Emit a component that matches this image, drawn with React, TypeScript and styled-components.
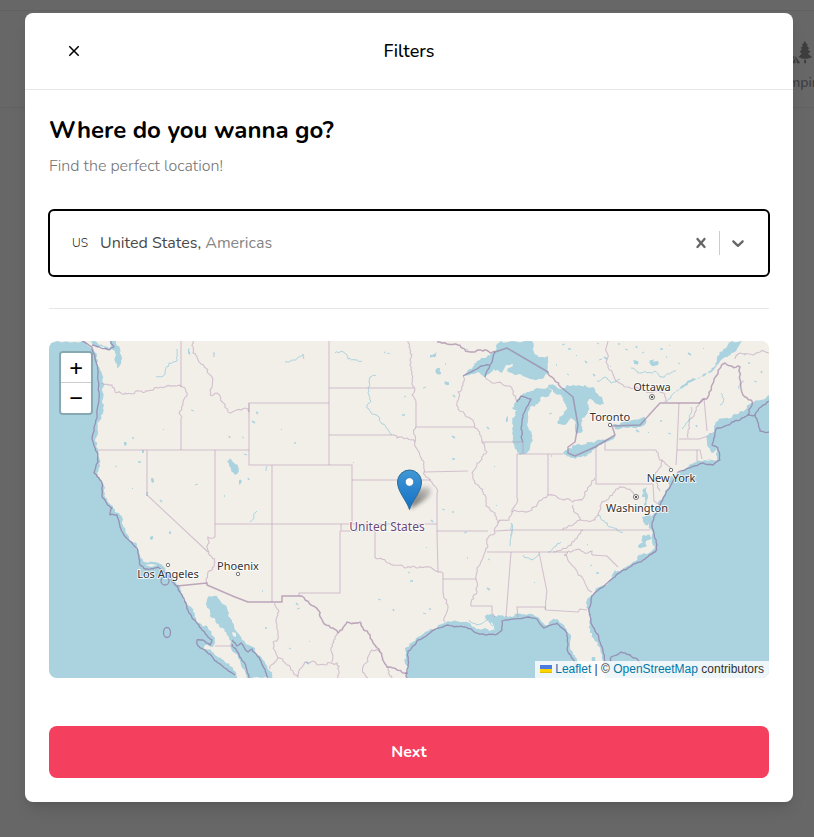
import React, { useState } from "react";
import styled, { createGlobalStyle } from "styled-components";
import { IoMdClose } from "react-icons/io";
import { GiForestCamp, GiBoatFishing } from "react-icons/gi";

const uiFont = `Nunito, Lato, "Open Sans", sans-serif`;

const GlobalStyle = createGlobalStyle`
  *, *::before, *::after { box-sizing: border-box; }
  body { margin: 0; background: #fff; font-family: ${uiFont}; color: #000; }
  button { font: inherit; color: inherit; border: 0; background: none; padding: 0; cursor: pointer; }
`;

const Page = styled.div`
  min-height: 100vh;
  position: relative;
  overflow: hidden;
`;

const Backdrop = styled.div`
  position: absolute;
  inset: 0;
  overflow: hidden;
`;

const NavEdge = styled.div`
  height: 11px;
  border-bottom: 1px solid #e5e7eb;
`;

const CategoryBar = styled.div`
  display: flex;
  justify-content: space-between;
  padding: 16px 0 2px;
  margin: 0 -26px 0 -42px;
  border-bottom: 1px solid #e5e7eb;
`;

const Category = styled.div`
  display: flex;
  flex-direction: column;
  align-items: center;
  gap: 8px;
  padding: 12px;
  color: #737373;
  font-size: 14px;
  font-weight: 500;
  line-height: 20px;
`;

const Scrim = styled.div`
  position: relative;
  min-height: 100vh;
  padding: 13px 21px 35px 25px;
  background: rgba(38, 38, 38, 0.7);
`;

const Modal = styled.section`
  max-width: 768px;
  margin: 0 auto;
  background: #fff;
  border-radius: 8px;
  box-shadow: 0 10px 15px -3px rgba(0, 0, 0, 0.1), 0 4px 6px -4px rgba(0, 0, 0, 0.1);
`;

const Header = styled.header`
  display: grid;
  grid-template-columns: 1fr auto 1fr;
  align-items: center;
  height: 77px;
  padding: 0 36px;
  border-bottom: 1px solid #e5e7eb;
`;

const CloseButton = styled.button`
  display: flex;
  justify-self: start;
  padding: 4px;
`;

const HeaderTitle = styled.h1`
  margin: 0;
  font-size: 18px;
  line-height: 28px;
  font-weight: 500;
`;

const Body = styled.div`
  display: flex;
  flex-direction: column;
  gap: 32px;
  padding: 24px;
`;

const Title = styled.h2`
  margin: 0 0 8px;
  font-size: 24px;
  line-height: 32px;
  font-weight: 700;
`;

const Subtitle = styled.p`
  margin: 0;
  font-size: 16px;
  line-height: 24px;
  font-weight: 300;
  color: #737373;
`;

const Control = styled.div`
  display: flex;
  align-items: center;
  margin: -1px;
  padding: 12px;
  border: 2px solid #000;
  border-radius: 6px;
`;

const ValueArea = styled.div`
  position: relative;
  display: flex;
  flex: 1;
  align-items: center;
  gap: 12px;
  height: 40px;
  padding: 0 10px;
  font-size: 16px;
  font-weight: 400;
  color: #4a4a4a;
`;

const CountryCode = styled.span`
  font-size: 12px;
  font-weight: 300;
  color: #1a1a1a;
`;

const Region = styled.span`
  color: #858585;
`;

const NativeSelect = styled.select`
  position: absolute;
  inset: 0;
  width: 100%;
  opacity: 0;
  cursor: pointer;
`;

const IndicatorButton = styled.button`
  display: flex;
  padding: 8px;
  color: #666;
`;

const Separator = styled.span`
  width: 1px;
  height: 24px;
  background: #ccc;
`;

const Divider = styled.hr`
  width: 100%;
  height: 1px;
  margin: 0;
  border: 0;
  background: #e5e7eb;
`;

const MapFrame = styled.div`
  position: relative;
  overflow: hidden;
  border-radius: 8px;
  background: #f2efe9;
`;

const MapDrawing = styled.svg`
  display: block;
  width: 100%;
  height: auto;
`;

const ZoomControl = styled.div`
  position: absolute;
  top: 10px;
  left: 10px;
  border: 2px solid rgba(0, 0, 0, 0.2);
  border-radius: 4px;
  background-clip: padding-box;
`;

const ZoomButton = styled.button`
  display: block;
  width: 30px;
  height: 30px;
  background: #fff;
  font: 22px/30px "DejaVu Sans Mono", monospace;
  color: #000;
  &:first-child {
    border-bottom: 1px solid #ccc;
    border-radius: 2px 2px 0 0;
  }
  &:last-child {
    border-radius: 0 0 2px 2px;
  }
`;

const Attribution = styled.div`
  position: absolute;
  right: 0;
  bottom: 0;
  padding: 0 5px;
  background: rgba(255, 255, 255, 0.8);
  font: 12px/17px "Liberation Sans", sans-serif;
  color: #333;
  a { color: #0078a8; text-decoration: none; }
`;

const Flag = styled.svg`
  margin-right: 3px;
`;

const Footer = styled.footer`
  display: flex;
  padding: 24px;
`;

const NextButton = styled.button`
  flex: 1;
  height: 52px;
  border-radius: 8px;
  background: #f43f5e;
  color: #fff;
  font-size: 16px;
  font-weight: 700;
`;

type Pt = [number, number];

const parse = (s: string): Pt[] =>
  s.trim().split(/\s+/).map((p) => p.split(",").map(Number) as Pt);

/* Midpoint displacement gives coasts and rivers their ragged look. */
function rough(s: string, amp: number, closed = false): string {
  let pts = parse(s);
  if (closed) pts.push(pts[0]);
  let seed = pts.length * 7919 + Math.round(pts[0][0] * 31);
  const rnd = () => {
    seed = (seed * 1103515245 + 12345) % 2147483648;
    return seed / 2147483648 - 0.5;
  };
  for (let level = 0; level < 3; level++) {
    const next: Pt[] = [pts[0]];
    for (let i = 1; i < pts.length; i++) {
      const [ax, ay] = pts[i - 1];
      const [bx, by] = pts[i];
      const len = Math.hypot(bx - ax, by - ay);
      if (len > 3 && len < 60) {
        const k = Math.min(len * 0.3, amp) * rnd() * 2;
        next.push([(ax + bx) / 2 - ((by - ay) / len) * k, (ay + by) / 2 + ((bx - ax) / len) * k]);
      }
      next.push([bx, by]);
    }
    pts = next;
  }
  return "M" + pts.map(([x, y]) => `${x.toFixed(1)} ${y.toFixed(1)}`).join("L") + (closed ? "Z" : "");
}

const line = (s: string) => "M" + s.trim().replace(/\s+/g, "L");

const seas = [
  "0,0 34,0 45,8 48,14 51,27 54,42 53,60 52,74 47,97 49,109 51,119 48,132 55,144 56,156 64,167 66,171 71,174 76,187 79,194 88,204 91,214 94,220 106,221 116,227 124,236 129,244 134,254 143,267 148,281 159,287 166,297 164,306 156,304 154,308 163,311 176,321 183,326 188,337 0,337",
  "158,259 160,255 169,257 172,261 178,267 183,279 188,291 196,301 206,307 209,314 216,321 223,331 224,337 198,337 193,327 189,317 183,310 182,300 173,287 163,277 158,267",
  "358,337 357,324 357,311 356,307 369,296 389,284 399,280 416,281 428,288 440,290 446,289 444,283 436,277 444,276 459,276 466,273 479,273 489,276 496,284 508,278 518,289 522,297 521,307 528,319 533,327 536,337",
  "720,337 556,337 556,324 553,314 548,301 541,284 538,264 546,250 563,237 566,229 577,226 588,216 598,213 606,205 603,194 600,184 604,174 609,163 616,150 621,135 633,129 656,119 668,119 668,108 664,112 659,106 659,94 669,80 683,76 696,69 702,62 712,59 720,54",
  "40,0 47,6 60,8 62,5 61,0 67,0 71,8 72,20 68,27 66,16 64,9 58,9 50,4 46,0",
];

const lakes = [
  "414,35 421,28 431,19 444,12 451,0 483,0 485,11 492,16 499,15 500,31 495,37 488,39 479,37 468,34 458,30 464,23 457,24 453,32 444,28 440,33 436,36 431,32",
  "471,114 466,108 464,98 464,84 468,69 463,67 467,61 473,54 480,51 488,47 499,46 503,49 498,56 491,57 489,63 481,66 479,74 478,84 483,94 481,107 476,113",
  "499,45 505,44 513,48 518,44 536,44 546,48 553,56 555,63 548,63 540,58 538,62 539,70 533,77 534,89 528,93 526,88 526,80 522,77 514,84 509,83 510,76 518,68 513,56 504,49",
  "514,112 517,109 523,108 524,104 538,101 556,99 566,94 562,99 552,104 542,112 526,118",
  "563,84 570,84 579,79 596,76 597,82 589,86 575,86 566,88",
  "626,51 637,42 647,38 659,32 668,19 674,9 683,0 693,0 688,8 676,16 668,24 660,32 646,39 636,45",
  "178,120 181,117 184,121 189,124 190,130 186,134 182,130",
  "381,14 389,11 387,15 381,17",
  "387,28 391,27 392,33 388,33",
  "396,40 400,41 400,44 397,44",
  "102,137 104,137 105,141 103,142",
  "97,151 99,151 99,155 97,155",
  "75,101 78,102 77,105 75,104",
  "93,109 95,109 95,112 93,112",
  "139,8 141,7 141,14 139,12",
  "164,11 166,12 167,17 164,16",
  "190,139 193,140 191,144 190,143",
  "207,70 210,71 209,74 207,72",
  "335,10 341,12 340,13 335,12",
  "457,77 459,75 458,81 457,81",
  "601,19 605,18 604,21 609,20 609,24 602,24",
  "584,19 589,20 588,24 585,23",
  "594,148 598,146 599,156 598,166 595,163 596,156 593,156",
  "593,195 601,194 603,197 597,200 598,205 589,206 594,202",
  "593,176 602,173 603,180 599,184 594,181",
  "637,127 652,121 662,118 652,125 640,129",
  "101,196 104,195 103,199 101,198",
  "120,191 122,190 122,193 120,193",
  "436,276 441,273 446,276 449,281 441,282",
  "540,285 542,284 543,292 541,292",
  "543,316 546,316 546,320 543,320",
];

/* Small ponds, each drawn as a short stroke. */
const ponds: Pt[] = [
  [115, 89], [84, 97], [143, 69], [181, 95], [67, 126], [90, 121], [84, 147], [112, 159], [147, 144], [176, 155],
  [194, 96], [204, 80], [233, 89], [246, 102], [196, 113], [200, 137], [356, 56], [354, 74], [305, 121],
  [248, 262], [249, 268], [214, 250], [241, 307], [258, 321], [261, 301], [217, 287], [330, 258], [345, 268], [360, 232],
  [362, 240], [378, 206], [383, 179], [416, 192], [419, 217], [440, 218], [439, 247], [486, 242], [381, 268], [375, 272],
  [499, 295], [474, 295], [404, 118], [446, 125], [439, 86], [501, 73], [503, 115], [549, 2], [556, 16], [562, 26],
  [570, 3], [577, 8], [588, 5], [594, 12], [612, 8], [621, 4], [545, 33], [551, 19], [618, 16], [630, 22],
  [640, 12], [655, 8], [700, 22], [706, 40], [713, 30], [696, 14], [520, 8], [528, 14], [537, 20], [514, 4],
  [508, 24], [519, 33], [588, 89], [600, 92], [612, 80], [620, 92], [648, 84], [542, 225], [548, 232], [539, 203],
  [405, 54], [375, 47], [397, 23], [418, 8], [404, 95], [448, 165], [404, 171], [394, 168],
];

const rivers = [
  "236,21 243,19 249,17 254,13 255,18",
  "286,12 292,10 297,13 299,18 306,19 313,20",
  "327,34 321,36 320,46 322,60 318,67 322,72 329,75 333,83 343,94",
  "107,36 116,33 120,22 128,20 128,8",
  "201,181 205,176 208,170",
  "217,130 218,125",
  "558,313 553,307 550,294",
  "462,195 462,182 461,205",
  "499,211 505,206 512,201",
  "474,214 482,219 490,213",
  "374,320 371,312",
  "548,40 556,36 562,42 571,38",
  "582,27 592,32 606,30 613,36 627,30",
  "617,61 622,55 626,51",
  "633,88 640,80 642,66",
  "672,52 675,58 671,64",
  "695,40 690,48",
  "549,174 560,186 574,191",
  "420,279 428,284 438,279 444,285",
];

const straightBorders = [
  "132,0 132,46", "132,77 132,109", "49,109 200,109", "98,109 98,154 159,211", "166,109 166,196",
  "166,183 388,183", "200,71 200,62 280,62", "200,62 200,124 303,124 303,183", "223,124 223,261",
  "280,0 280,124", "280,47 365,47", "280,94 343,94", "303,139 382,139", "292,183 292,190 326,190 326,217",
  "291,190 291,252 250,252 250,255", "367,61 367,86 426,86", "375,131 419,130", "388,152 388,191 389,231",
  "388,190 439,190", "433,101 474,101 474,113", "468,113 468,157", "468,113 514,113", "499,113 499,154",
  "446,190 463,189 534,189 601,189", "438,211 519,211", "394,238 427,238", "394,232 394,252",
  "462,211 457,276", "422,265 443,265 443,272 446,276", "490,211 498,251", "469,276 468,266 496,266 497,269 529,271 531,268 538,269",
  "547,106 547,143 604,143 605,160 611,164", "556,100 556,109 607,109", "630,62 628,107 627,124",
  "630,98 650,98 659,95", "628,109 651,109 653,118", "648,109 648,120", "655,57 658,90",
  "166,305 183,305", "543,214 558,215 569,226",
];

const naturalBorders = [
  "53,42 63,44 66,51 73,53 86,51 99,50 111,46 133,46", "133,46 138,52 134,64 130,72 133,77",
  "144,0 144,12 152,23 163,36 161,54 168,52 179,71 196,67 200,71",
  "166,196 159,196 160,211 166,221 159,231 158,242",
  "326,217 340,222 356,227 368,227 381,226 389,231 394,232",
  "343,94 348,97 358,97 366,101", "359,0 361,12 363,31 366,49 363,54 367,61",
  "367,86 366,101 373,119 375,131 383,141 388,152",
  "414,35 414,44 409,51 409,66 424,79 426,87 433,101 438,111 428,122 423,132 429,144 436,154 437,165 446,174 449,182 446,192 439,197 436,211 428,227 428,251 422,265",
  "468,157 463,171 460,179 449,182", "463,171 473,170 483,169 490,160 499,154 509,157 524,161 536,154 542,144 546,137",
  "436,36 443,42 463,47 468,61", "394,252 399,266 396,281", "498,251 496,269",
  "515,214 526,227 543,251", "534,189 523,201 504,211", "515,214 526,209 543,210 543,214",
  "513,189 531,179 524,164", "531,179 546,179 551,165 560,157 573,146 580,148 588,158", "607,109 613,119 606,134 608,142 611,150", "613,119 623,128",
  "654,57 643,77 639,97", "559,0 559,24 569,41 578,46 593,49 616,53 616,61", "686,18 688,14 704,14 711,11 720,12",
  "226,262 229,274 228,300 224,301 229,317 238,324 249,336 256,321 276,324 288,322 289,337",
  "288,292 282,307 283,321", "331,311 323,309 314,326 319,337", "338,326 343,337", "229,317 221,328",
];

const nationalBorders = [
  "388,1 398,3 409,4 423,11 434,10 446,11", "651,62 655,58 659,56 663,44 676,22 691,26 694,54 702,59 703,64 699,74",
  "269,269 274,281 289,292 298,281 311,281 319,292 331,311 338,326 359,332", "499,31 505,38 513,47",
  "253,255 269,269",
];

const plainNational = [
  "446,11 458,7 499,31", "513,47 524,56 529,84 526,101 519,106 519,112 526,115 546,106 566,94 563,85 591,84 611,62 651,62",
  "128,245 158,242 158,244 186,256 199,261 233,261 233,255 253,255",
];

const maritime = [
  "33,0 43,6 46,17 49,31 50,51 48,77 43,97 48,111 49,121 45,132 53,142 53,156 63,167 61,174 68,174 74,192 88,207 91,224 96,228 109,226 121,236 129,247 136,261 143,277 153,289 163,299 161,304 154,299 148,299 148,303 158,311 169,322 186,334",
  "43,4 52,7 60,9 65,6 62,0",
  "358,337 359,324 359,310 369,299 389,287 399,284 416,286 430,293 446,294 453,289 453,280 479,276 488,278 495,287 508,282 518,292 519,311 527,325",
  "720,91 711,90 706,74 699,74 691,79 679,84 668,87 663,104 669,107 671,119 664,124 654,122 629,131 614,157 606,174 603,184 608,204 606,211 594,219 579,227 564,237 544,254 540,267 543,284 551,301 557,323",
  "706,74 712,66 720,60",
  "562,321 562,316 572,311 586,317 597,328",
  "414,35 432,25 440,24", "446,11 436,36", "468,61 472,55 482,58 475,72 472,88 474,101",
  "183,299 188,305 192,302 199,311 203,308 212,320 219,337", "183,303 192,317 197,326 200,337",
];

const MAP_INK = "#333";

type City = { name: string; label: Pt; dot: Pt; capital?: boolean };

const cities: City[] = [
  { name: "Ottawa", label: [603, 50], dot: [603, 56], capital: true },
  { name: "Toronto", label: [561, 80], dot: [561, 84] },
  { name: "New York", label: [622, 141], dot: [622, 129] },
  { name: "Washington", label: [588, 171], dot: [587, 156], capital: true },
  { name: "Los Angeles", label: [119, 237], dot: [119, 224] },
  { name: "Phoenix", label: [189, 229], dot: [189, 233] },
];

const MapLabel = styled.text<{ $country?: boolean }>`
  font-family: "Noto Sans", sans-serif;
  font-size: ${(p) => (p.$country ? 12 : 11)}px;
  fill: ${(p) => (p.$country ? "#6b4a75" : MAP_INK)};
  text-anchor: middle;
  paint-order: stroke;
  stroke: rgba(255, 255, 255, 0.8);
  stroke-width: 2px;
  stroke-linejoin: round;
`;

function UsaMap() {
  return (
    <MapDrawing viewBox="0 0 720 337" role="img" aria-label="Map of the United States">
      <defs>
        <linearGradient id="pin" x1="0" y1="0" x2="0" y2="1">
          <stop offset="0" stopColor="#4198d4" />
          <stop offset="1" stopColor="#126fc6" />
        </linearGradient>
        <linearGradient id="pinShadow" x1="0" y1="1" x2="1" y2="0">
          <stop offset="0" stopOpacity="0.6" />
          <stop offset="1" stopOpacity="0.12" />
        </linearGradient>
        <filter id="soft" x="-50%" y="-50%" width="200%" height="200%">
          <feGaussianBlur stdDeviation="2" />
        </filter>
      </defs>
      <rect width="720" height="337" fill="#f2efe9" />
      <g fill="#aad3df">
        {seas.map((s) => <path key={s} d={rough(s, 1.6, true)} />)}
        {lakes.map((s) => <path key={s} d={rough(s, 1.4, true)} />)}
      </g>
      <g fill="none" stroke="#aad3df" strokeWidth="1" strokeLinejoin="round">
        {rivers.map((s) => <path key={s} d={rough(s, 1.5)} />)}
        {ponds.map(([x, y], i) => (
          <path key={i} d={`M${x - 1} ${y}l${1 + (i % 3)} ${(i % 4) - 1}`} strokeWidth={1 + (i % 2) * 0.6} />
        ))}
      </g>
      <g fill="none" stroke="#b795b7" strokeOpacity="0.52" strokeWidth="1.1">
        {straightBorders.map((s) => <path key={s} d={line(s)} />)}
        {naturalBorders.map((s) => <path key={s} d={rough(s, 1.6)} />)}
      </g>
      <g fill="none" stroke="#98749b" strokeOpacity="0.6" strokeWidth="1.5" strokeLinejoin="round">
        {nationalBorders.map((s) => <path key={s} d={rough(s, 1.4)} />)}
        {plainNational.map((s) => <path key={s} d={line(s)} />)}
      </g>
      <g fill="none" stroke="#8d79a6" strokeOpacity="0.75" strokeWidth="1.3" strokeLinejoin="round">
        {maritime.map((s) => <path key={s} d={rough(s, 0.7)} />)}
        <ellipse cx="118" cy="291.500" rx="3.500" ry="5" />
        <ellipse cx="116" cy="240" rx="4" ry="4" />
      </g>
      <path d="M183 291l4 1v4l-3 -1zM172 286l4 3l-2 2zM96 224l6 -1l6 1l-6 2z" fill="#f2efe9" />
      {cities.map((c) => (
        <g key={c.name}>
          <circle cx={c.dot[0]} cy={c.dot[1]} r={c.capital ? 2.5 : 1.7} fill="#fff" stroke="#555" strokeWidth="0.8" />
          {c.capital && <circle cx={c.dot[0]} cy={c.dot[1]} r="1.100" fill="#333" />}
          <MapLabel x={c.label[0]} y={c.label[1]}>{c.name}</MapLabel>
        </g>
      ))}
      <MapLabel $country x="338" y="190">United States</MapLabel>
      <path d="M361 168L365 153Q374 143 381 147Q385 153 374 160Z" fill="url(#pinShadow)" filter="url(#soft)" />
      <path
        d="M360.500 168.500C358 160 348.500 151 348.500 141a12 12 0 0 1 24 0C372.500 151 363 160 360.500 168.500Z"
        fill="url(#pin)" stroke="#2e6c97" strokeWidth="1"
      />
      <circle cx="360.500" cy="141" r="4.200" fill="#fff" stroke="#2e6c97" strokeWidth="0.6" />
    </MapDrawing>
  );
}

function App() {
  const [country, setCountry] = useState("US");
  return (
    <Page>
      <GlobalStyle />
      <Backdrop aria-hidden="true">
        <NavEdge />
        <CategoryBar>
          <Category><GiBoatFishing size={26} />Lake</Category>
          <Category><GiForestCamp size={26} />Camping</Category>
        </CategoryBar>
      </Backdrop>
      <Scrim>
        <Modal role="dialog" aria-labelledby="filters-title">
          <Header>
            <CloseButton aria-label="Close"><IoMdClose size={18} /></CloseButton>
            <HeaderTitle id="filters-title">Filters</HeaderTitle>
          </Header>
          <Body>
            <div>
              <Title>Where do you wanna go?</Title>
              <Subtitle>Find the perfect location!</Subtitle>
            </div>
            <Control>
              <ValueArea>
                {country && (
                  <>
                    <CountryCode>US</CountryCode>
                    <span>United States, <Region>Americas</Region></span>
                  </>
                )}
                <NativeSelect aria-label="Country" value={country} onChange={(e) => setCountry(e.target.value)}>
                  <option value="" />
                  <option value="US">United States, Americas</option>
                </NativeSelect>
              </ValueArea>
              <IndicatorButton aria-label="Clear selection" onClick={() => setCountry("")}>
                <svg width="20" height="20" viewBox="0 0 20 20" fill="currentColor">
                  <path d="M14.348 14.849c-0.469 0.469-1.229 0.469-1.697 0l-2.651-3.030-2.651 3.029c-0.469 0.469-1.229 0.469-1.697 0-0.469-0.469-0.469-1.229 0-1.697l2.758-3.150-2.759-3.152c-0.469-0.469-0.469-1.228 0-1.697s1.228-0.469 1.697 0l2.652 3.031 2.651-3.031c0.469-0.469 1.228-0.469 1.697 0s0.469 1.229 0 1.697l-2.758 3.152 2.758 3.150c0.469 0.469 0.469 1.229 0 1.698z" />
                </svg>
              </IndicatorButton>
              <Separator />
              <IndicatorButton aria-label="Open country list">
                <svg width="20" height="20" viewBox="0 0 20 20" fill="currentColor">
                  <path d="M4.516 7.548c0.436-0.446 1.043-0.481 1.576 0l3.908 3.747 3.908-3.747c0.533-0.481 1.141-0.446 1.574 0 0.436 0.445 0.408 1.197 0 1.615-0.406 0.418-4.695 4.502-4.695 4.502-0.217 0.223-0.502 0.335-0.787 0.335s-0.570-0.112-0.789-0.335c0 0-4.287-4.084-4.695-4.502s-0.436-1.170 0-1.615z" />
                </svg>
              </IndicatorButton>
            </Control>
            <Divider />
            <MapFrame>
              <UsaMap />
              <ZoomControl>
                <ZoomButton aria-label="Zoom in">+</ZoomButton>
                <ZoomButton aria-label="Zoom out">−</ZoomButton>
              </ZoomControl>
              <Attribution>
                <Flag width="12" height="8" viewBox="0 0 12 8" aria-hidden="true">
                  <path fill="#4C7BE1" d="M0 0h12v4H0z" />
                  <path fill="#FFD500" d="M0 4h12v3H0z" />
                  <path fill="#E0BC00" d="M0 7h12v1H0z" />
                </Flag>
                <a href="https://leafletjs.com">Leaflet</a> | ©{" "}
                <a href="https://www.openstreetmap.org/copyright">OpenStreetMap</a> contributors
              </Attribution>
            </MapFrame>
          </Body>
          <Footer>
            <NextButton>Next</NextButton>
          </Footer>
        </Modal>
      </Scrim>
    </Page>
  );
}

export default App;
